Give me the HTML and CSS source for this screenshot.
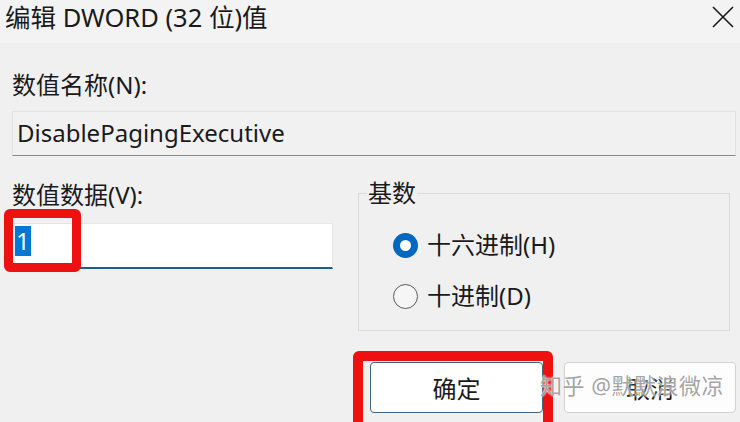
FILE: index.html
```html
<!DOCTYPE html>
<html lang="zh-CN">
<head>
  <meta charset="UTF-8">
  <meta name="viewport" content="width=device-width, initial-scale=1">
  <title>编辑 DWORD (32 位)值</title>
  <link rel="stylesheet" href="styles.css">
</head>

<body>

  <div class="titlebar">
    <div class="title">编辑 DWORD (32 位)值</div>
    <div class="close-btn">
      <svg width="22" height="22" viewBox="0 0 22 22">
        <path d="M1 1 L21 21 M21 1 L1 21" stroke="#1a1a1a" stroke-width="1.6" fill="none"/>
      </svg>
    </div>
  </div>

  <div class="dialog">
    <div class="label name-label">数值名称(N):</div>
    <div class="name-field">DisablePagingExecutive</div>

    <div class="data-row">
      <div class="data-col">
        <div class="label">数值数据(V):</div>
        <div class="data-input"><span class="selected">1</span></div>
      </div>

      <fieldset class="base-group">
        <legend>基数</legend>
        <div class="radio-row">
          <span class="radio checked"></span>
          <span>十六进制(H)</span>
        </div>
        <div class="radio-row">
          <span class="radio"></span>
          <span>十进制(D)</span>
        </div>
      </fieldset>
    </div>

    <div class="button-row">
      <button class="dlg-btn ok-btn">确定</button>
      <button class="dlg-btn">取消</button>
    </div>
  </div>

  <!-- red annotation marks drawn over the screenshot -->
  <div class="mark mark-value"></div>
  <div class="mark mark-ok"></div>

  <div class="watermark">知乎 @默默浪微凉</div>

</body>
</html>
```

FILE: styles.css
```css
:root {
  --bg-color: #f0f0f0;
  --title-bg: #f3f3f3;
  --font-color: #1a1a1a;
  --accent: #0067c0;
  --mark-red: #ee1111;
}

* { margin: 0; padding: 0; box-sizing: border-box; }

body {
  font-family: "Noto Sans", "Noto Sans CJK SC", sans-serif;
  background-color: var(--bg-color);
  color: var(--font-color);
  width: 740px;
  height: 422px;
  overflow: hidden;
  position: relative;
}

.titlebar {
  display: flex;
  justify-content: space-between;
  align-items: flex-start;
  height: 43px;
  background-color: var(--title-bg);
  padding: 1px 6px 0 5px;
}

.title {
  font-size: 25.5px;
  line-height: 32px;
}

.close-btn {
  padding-top: 5px;
}

.dialog {
  padding: 0 4px 0 12px;
}

.label {
  font-size: 24px;
  line-height: 28px;
}

.name-label {
  margin-top: 28px;
}

.name-field {
  margin-top: 12px;
  height: 45px;
  padding-left: 4px;
  font-size: 24px;
  line-height: 42px;
  background: #f1f1f1;
  border: 1px solid #e2e2e2;
  border-bottom: 1px solid #8a8a8a;
}

.data-row {
  display: flex;
  gap: 25px;
  margin-top: 25px;
}

.data-col {
  width: 321px;
}

.data-input {
  margin-top: 14px;
  height: 46px;
  padding: 2px 2px 0;
  background: white;
  border: 1px solid #e6e6e6;
  border-bottom: 2px solid #1d5d96;
  font-size: 24px;
  line-height: 30px;
}

.selected {
  display: inline-block;
  background: #0078d7;
  color: white;
  padding: 0 1px;
}

.base-group {
  width: 372px;
  height: 152px;
  margin-top: -2px;
  border: 1px solid #dadada;
  padding: 25px 0 0 34px;
  display: flex;
  flex-direction: column;
  gap: 25px;
}

.base-group legend {
  font-size: 24px;
  line-height: 28px;
  padding: 0 1px;
  margin-left: -26px;
}

.radio-row {
  display: flex;
  align-items: center;
  gap: 9px;
  font-size: 24px;
  line-height: 26px;
}

.radio {
  width: 25px;
  height: 25px;
  border-radius: 50%;
  border: 1.5px solid #5a5a5a;
  background: #f6f6f6;
}

.radio.checked {
  border: 7.5px solid var(--accent);
  background: white;
}

.button-row {
  display: flex;
  justify-content: flex-end;
  gap: 21px;
  margin-top: 31px;
}

.dlg-btn {
  width: 172px;
  height: 51px;
  font-family: inherit;
  font-size: 24px;
  color: var(--font-color);
  background: #fdfdfd;
  border: 1px solid #d2d2d2;
  border-radius: 4px;
}

.ok-btn {
  width: 173px;
  background: white;
  border-color: #3f6585;
}

.mark {
  position: absolute;
  border: 9px solid var(--mark-red);
  border-radius: 6px;
}

.mark-value {
  left: 4px;
  top: 209px;
  width: 77px;
  height: 63px;
}

.mark-ok {
  left: 353px;
  top: 351px;
  width: 200px;
  height: 90px;
  border-width: 10px;
}

.watermark {
  position: absolute;
  left: 540px;
  top: 371px;
  font-size: 22px;
  line-height: 28px;
  color: rgba(140, 140, 140, 0.8);
  text-shadow: 0 0 2px #fff, 0 0 2px #fff;
  letter-spacing: 0.5px;
}
```
